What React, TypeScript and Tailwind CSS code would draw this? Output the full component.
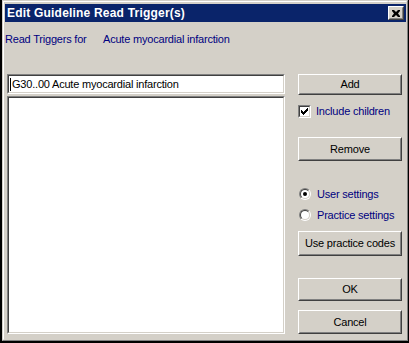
import React from "react";

const FONT = "font-['Liberation_Sans',Arial,sans-serif]";

function Sunken({ className, children }: { className?: string; children?: React.ReactNode }) {
  return (
    <div className={`border border-t-[#808080] border-l-[#808080] border-r-white border-b-white ${className ?? ""}`}>
      <div className="w-full h-full border border-t-[#404040] border-l-[#404040] border-r-[#d4d0c8] border-b-[#d4d0c8] bg-white">
        {children}
      </div>
    </div>
  );
}

function Button({ label, className }: { label: string; className?: string }) {
  return (
    <div className={`w-[104px] border border-t-white border-l-white border-r-[#404040] border-b-[#404040] ${className ?? ""}`}>
      <div className="h-full flex items-center justify-center border border-t-[#d4d0c8] border-l-[#d4d0c8] border-r-[#808080] border-b-[#808080] text-black">
        {label}
      </div>
    </div>
  );
}

function Radio({ checked, label }: { checked?: boolean; label: string }) {
  return (
    <div className="flex items-center h-[14px]">
      <div className="ml-[1px] w-[12px] h-[12px] rounded-full border border-t-[#808080] border-l-[#808080] border-r-white border-b-white">
        <div className="w-full h-full rounded-full border border-t-[#404040] border-l-[#404040] border-r-[#d4d0c8] border-b-[#d4d0c8] bg-white flex items-center justify-center">
          {checked && <div className="w-[4px] h-[4px] rounded-full bg-black" />}
        </div>
      </div>
      <span className="ml-[6px] text-[#000080]">{label}</span>
    </div>
  );
}

export default function App() {
  return (
    <div className={`w-[409px] h-[343px] bg-black pl-[2px] pr-[1px] pb-[2px] ${FONT} text-[11px] tracking-[-0.2px]`}>
      <div className="w-full h-full bg-[#d4d0c8] border border-t-[#d4d0c8] border-l-[#d4d0c8] border-r-[#808080] border-b-[#808080]">
        <div className="w-full h-full border border-t-white border-l-white border-r-[#d4d0c8] border-b-[#d4d0c8] pt-[2px] pl-[1px] flex flex-col">
          {/* title bar */}
          <div className="h-[18px] shrink-0 bg-[#0a246a] flex items-center justify-between pl-[2px] pr-[2px]">
            <span className="text-white font-bold text-[12px] tracking-[0.2px]">Edit Guideline Read Trigger(s)</span>
            <div className="w-[16px] h-[14px] border border-t-white border-l-white border-r-[#404040] border-b-[#404040] bg-[#d4d0c8]">
              <div className="w-full h-full border border-t-[#d4d0c8] border-l-[#d4d0c8] border-r-[#808080] border-b-[#808080] flex items-center justify-center">
                <svg width="8" height="7" viewBox="0 0 8 7">
                  <path d="M0 0h2l2 2 2-2h2v1L6 3.5 8 6v1H6L4 5 2 7H0V6l2-2.5L0 1z" fill="black" />
                </svg>
              </div>
            </div>
          </div>

          {/* header line */}
          <div className="flex items-center mt-[10px] h-[14px] shrink-0 text-[#000080]">
            <span className="w-[98px]">Read Triggers for</span>
            <span>Acute myocardial infarction</span>
          </div>

          {/* main */}
          <div className="flex mt-[28px] pl-[2px]">
            <div className="w-[278px] flex flex-col">
              <Sunken className="h-[20px]">
                <div className="h-full flex items-center pl-[1px] text-black">
                  <span className="w-[1px] h-[13px] bg-black mr-[1px]" />
                  G30..00 Acute myocardial infarction
                </div>
              </Sunken>
              <Sunken className="h-[238px] mt-[2px]" />
            </div>

            <div className="ml-[13px] flex flex-col">
              <Button label="Add" className="h-[21px]" />
              <div className="flex items-center mt-[9px] h-[14px]">
                <div className="w-[13px] h-[13px] border border-t-[#808080] border-l-[#808080] border-r-white border-b-white">
                  <div className="w-full h-full border border-t-[#404040] border-l-[#404040] border-r-[#d4d0c8] border-b-[#d4d0c8] bg-white flex items-center justify-center">
                    <svg width="7" height="7" viewBox="0 0 7 7">
                      <path d="M0 2h1v1h1v1h1V3h1V2h1V1h1V0h1v3H6v1H5v1H4v1H3v1H2V6H1V5H0z" fill="black" />
                    </svg>
                  </div>
                </div>
                <span className="ml-[5px] text-[#000080]">Include children</span>
              </div>
              <Button label="Remove" className="h-[24px] mt-[19px]" />
              <div className="mt-[26px] flex flex-col gap-[7px]">
                <Radio checked label="User settings" />
                <Radio label="Practice settings" />
              </div>
              <Button label="Use practice codes" className="h-[25px] mt-[9px]" />
              <Button label="OK" className="h-[23px] mt-[22px]" />
              <Button label="Cancel" className="h-[24px] mt-[9px]" />
            </div>
          </div>
        </div>
      </div>
    </div>
  );
}
